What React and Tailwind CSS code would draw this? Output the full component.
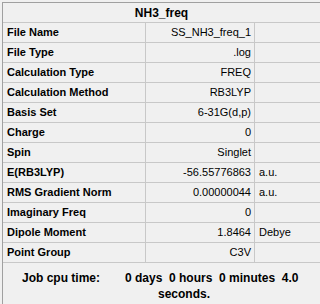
const rows = [
  ["File Name", "SS_NH3_freq_1", ""],
  ["File Type", ".log", ""],
  ["Calculation Type", "FREQ", ""],
  ["Calculation Method", "RB3LYP", ""],
  ["Basis Set", "6-31G(d,p)", ""],
  ["Charge", "0", ""],
  ["Spin", "Singlet", ""],
  ["E(RB3LYP)", "-56.55776863", "a.u."],
  ["RMS Gradient Norm", "0.00000044", "a.u."],
  ["Imaginary Freq", "0", ""],
  ["Dipole Moment", "1.8464", "Debye"],
  ["Point Group", "C3V", ""],
];

export default function App() {
  return (
    <div className="w-[320px] h-[304px] bg-[#f0f0f0] pt-[2px] pl-[2px] text-[11px] text-black font-['Liberation_Sans',Arial,sans-serif] overflow-hidden">
      <div className="h-full border-l border-t border-[#a0a0a0]">
        {/* title */}
        <div className="h-[20px] flex items-center justify-center font-bold text-[12px] border-b border-[#c8c8c8]">
          NH3_freq
        </div>

        {/* property rows */}
        {rows.map(([label, value, unit]) => (
          <div key={label} className="flex h-[20px] border-b border-[#c8c8c8]">
            <div className="w-[143px] pl-[4px] flex items-center font-bold border-r border-[#c8c8c8]">
              {label}
            </div>
            <div className="w-[109px] pr-[3px] flex items-center justify-end border-r border-[#c8c8c8]">
              {value}
            </div>
            <div className="flex-1 pl-[4px] flex items-center">{unit}</div>
          </div>
        ))}

        {/* cpu time */}
        <div className="flex pt-[7px] font-bold text-[12px] leading-[16px]">
          <div className="w-[122px] pl-[19px]">Job cpu time:</div>
          <div>
            <div className="whitespace-pre">0 days  0 hours  0 minutes  4.0</div>
            <div className="pl-[33px]">seconds.</div>
          </div>
        </div>
      </div>
    </div>
  );
}
